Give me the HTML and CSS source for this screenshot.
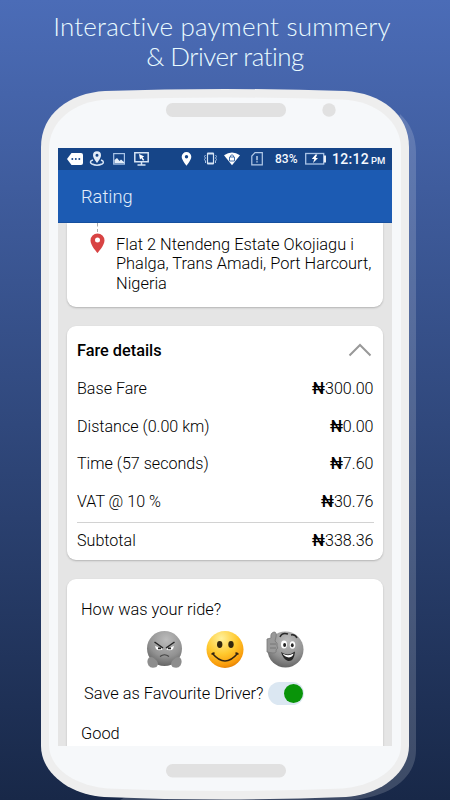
FILE: index.html
```html
<!DOCTYPE html>
<html lang="en">
<head>
<meta charset="utf-8">
<title>Rating</title>
<link rel="stylesheet" href="styles.css">
</head>
<body>
<main class="promo">
  <svg class="casing" viewBox="0 0 450 800" aria-hidden="true">
    <path class="casing-shadow" d="M400 114C411 124 416 137 416 152V750C416 778 390 797 352 800H120L300 700Z"/>
    <path class="casing-rim" d="M41 147C41 114 69 93 105 91Q225 87 345 91C381 93 409 114 409 147V746C409 773 380 795 346 797Q225 802 104 797C70 795 41 773 41 746Z"/>
    <path class="casing-face" d="M49 149C49 122 73 101 108 99.500Q225 95.500 342 99.500C377 101 401 122 401 149V745C401 768 375 786 342 788.500Q225 793.500 108 788.500C75 786 49 768 49 745Z"/>
    <rect class="casing-part" x="166" y="103" width="120" height="14" rx="6.500"/>
    <circle class="casing-part" cx="329" cy="110" r="6.700"/>
    <rect class="casing-part" x="166" y="764" width="120" height="13.500" rx="6.500"/>
  </svg>
  <div class="content">
    <h1 class="headline"><span class="headline-top">Interactive payment summery</span><span class="headline-bottom">&amp; Driver rating</span></h1>
    <section class="screen">
      <div class="status">
        <svg class="status-icons" width="95" height="22" viewBox="58 148 95 22">
          <path fill="#fff" d="M67 159L71.500 153H81Q83 153 83 155V163Q83 165 81 165H71.500Z"/>
          <g fill="#164588"><circle cx="72.300" cy="159" r="1"/><circle cx="75.800" cy="159" r="1"/><circle cx="79.300" cy="159" r="1"/></g>
          <path fill="#e4edf8" fill-rule="evenodd" d="M97 151.200A4 4 0 0 1 101 155.200C101 158 97 163 97 163S93 158 93 155.200A4 4 0 0 1 97 151.200ZM97 153.800A1.500 1.500 0 1 0 97 156.800A1.500 1.500 0 0 0 97 153.800Z"/>
          <path fill="none" stroke="#d5e3f4" stroke-width="1.500" d="M93 160C89.500 161 90 163 92 164Q97 166.300 102 164C104 163 104 161 101 160"/>
          <rect x="113.700" y="153.600" width="10.700" height="10.500" fill="none" stroke="#a9c4e7" stroke-width="1.200"/><path fill="#e4edf8" d="M114.500 160L117 158L119.500 161L121 159.500L124 162V163.300H114.500Z"/>
          <path fill="none" stroke="#d5e3f4" stroke-width="1.500" d="M134.800 152.800H148.200V161.700H134.800ZM141.500 162V165M137.500 165H145.500"/><path fill="#fff" d="M139 154L144.200 156.500L142.500 157.400L144.300 160L143 160.700L141.400 158.200L140 159.400Z"/>
        </svg>
        <svg class="status-icons" width="96" height="22" viewBox="175 148 96 22">
          <path fill="#fff" fill-rule="evenodd" d="M186.500 152A4.800 4.800 0 0 1 191.300 156.800C191.300 160.300 186.500 165.700 186.500 165.700S181.700 160.300 181.700 156.800A4.800 4.800 0 0 1 186.500 152ZM186.500 155A1.700 1.700 0 1 0 186.500 158.400A1.700 1.700 0 0 0 186.500 155Z"/>
          <rect x="207.500" y="153" width="6" height="11" rx=".5" fill="none" stroke="#d5e3f4" stroke-width="1.200"/><path d="M207.500 153.700H213.500M207.500 163.300H213.500" stroke="#d5e3f4" stroke-width="1.500"/>
          <path fill="none" stroke="#a9c4e7" d="M205.500 155L204.500 156.500L205.500 158L204.500 159.500L205.500 161V163M215.500 155L216.500 156.500L215.500 158L216.500 159.500L215.500 161V163"/>
          <path fill="#fff" d="M224 155.200Q232 149.800 240 155.200L232 165.200Z"/><path fill="none" stroke="#4772ad" d="M230.500 157V155.700Q232 153.800 233.500 155.700V157M229.500 157H234.500V161H229.500Z"/>
          <path fill="none" stroke="#b3cae8" stroke-width="1.200" d="M255 152.700H262.300V164.800H251.800V156Z"/><path stroke="#d5e3f4" stroke-width="1.300" d="M257 156V160.200M257 161.300V162.500"/>
        </svg>
        <span class="percent">83%</span>
        <svg class="battery" width="24" height="22" viewBox="304 148 24 22">
          <rect x="305.700" y="153.500" width="18" height="10.500" fill="none" stroke="#a9c4e7" stroke-width="1.300"/><path stroke="#fff" stroke-width="1.800" d="M325 155.500V162.500"/><path fill="#fff" d="M315.500 154.500L311.800 159H314.300L313 163L318 158H315.700L317.300 154.500Z"/>
        </svg>
        <div class="clock"><span>12:12</span><small>PM</small></div>
      </div>
      <header class="appbar">Rating</header>
      <div class="feed">
        <article class="card destination">
          <svg class="pin" width="16" height="32" viewBox="90 223 16 32">
            <path stroke="#aaa" d="M97.500 223V226.500M97.500 229V232"/>
            <path fill="#d84343" fill-rule="evenodd" d="M97.500 233.500A7 7 0 0 1 104.500 240.500C104.500 245.500 97.500 253 97.500 253S90.500 245.500 90.500 240.500A7 7 0 0 1 97.500 233.500ZM97.500 237.600A2.500 2.500 0 1 0 97.500 242.600A2.500 2.500 0 0 0 97.500 237.600Z"/>
          </svg>
          <p class="address">Flat 2 Ntendeng Estate Okojiagu i<br>Phalga, Trans Amadi, Port Harcourt,<br>Nigeria</p>
        </article>
        <article class="card fare">
          <div class="row fare-title"><h2>Fare details</h2>
            <svg width="24" height="14" viewBox="0 0 24 14"><path fill="none" stroke="#999" stroke-width="2" d="M1.500 12.500L12 2L22.500 12.500"/></svg>
          </div>
          <div class="row"><span>Base Fare</span><span><b>₦</b>300.00</span></div>
          <div class="row"><span>Distance (0.00 km)</span><span><b>₦</b>0.00</span></div>
          <div class="row"><span>Time (57 seconds)</span><span><b>₦</b>7.60</span></div>
          <div class="row"><span>VAT @ 10 %</span><span><b>₦</b>30.76</span></div>
          <div class="row subtotal"><span>Subtotal</span><span><b>₦</b>338.36</span></div>
        </article>
        <article class="card ride">
          <p class="question">How was your ride?</p>
          <svg class="faces" width="160" height="40" viewBox="145 630 160 40">
            <defs>
              <radialGradient id="gray" cx=".55" cy=".25" r=".75"><stop offset="0" stop-color="#bcbcbc"/><stop offset=".65" stop-color="#929292"/><stop offset="1" stop-color="#666"/></radialGradient>
              <radialGradient id="gold" cx=".4" cy=".2" r=".85"><stop offset="0" stop-color="#fff09a"/><stop offset=".5" stop-color="#ffc92e"/><stop offset=".85" stop-color="#f99b0b"/><stop offset="1" stop-color="#dd7904"/></radialGradient>
            </defs>
            <circle cx="164.500" cy="648.500" r="17.500" fill="url(#gray)"/>
            <g fill="#8d8d8d"><path d="M149 657.500Q152 656 155 659Q160 663 156.500 667Q151 669 148.500 665.500Q146 661 149 657.500Z"/><path d="M180 657.500Q177 656 174 659Q169 663 172.500 667Q178 669 180.500 665.500Q183 661 180 657.500Z"/></g>
            <path fill="#fff" d="M155 646L163 649Q159 651.500 156 649ZM174 646L166 649Q170 651.500 173 649Z"/>
            <path fill="none" stroke="#252525" stroke-width="1.500" d="M154.500 642L163 648M174.500 642L166 648"/>
            <path fill="none" stroke="#444" stroke-width="1.100" d="M160 656.500Q164.500 653 169 656.500"/>
            <path fill="#222" d="M158 647.500H161V649.300H158ZM168 647.500H171V649.300H168Z"/>
            <circle cx="225" cy="649.500" r="18.500" fill="url(#gold)"/>
            <g fill="#33270e"><ellipse cx="219.700" cy="644.500" rx="2.700" ry="3.400"/><ellipse cx="231" cy="644.500" rx="2.700" ry="3.400"/></g>
            <path fill="none" stroke="#332411" stroke-width="1.600" stroke-linecap="round" d="M212.500 653.500Q225 668.500 237.500 653.500M212 654L214 653M236 653L238 654"/>
            <circle cx="285.500" cy="649.500" r="18" fill="url(#gray)"/>
            <path fill="#999" stroke="#777" stroke-width=".8" d="M267 639L271 638Q270 633 274 632Q277 632 276 637L275 641Q278 643 277 646Q279 648 276 650Q277 653 273 653L267 652Z"/>
            <path fill="none" stroke="#777" d="M270 644H276M270 648H276"/>
            <g fill="#fff"><ellipse cx="284" cy="644.500" rx="3" ry="3.900"/><ellipse cx="292.500" cy="645" rx="2.800" ry="3.800"/></g>
            <g fill="#222"><ellipse cx="284.600" cy="645" rx="1.500" ry="2"/><ellipse cx="292.300" cy="645.300" rx="1.400" ry="2"/></g>
            <path fill="none" stroke="#292929" stroke-width="1.500" d="M280 637Q282 632 288 634M291 635Q295 634 297 638"/>
            <path fill="#252525" d="M281 652Q288 657 295 651.500Q294 662 288 661Q283 659 281 652Z"/><path fill="#fff" d="M282.500 653.500Q288 657 293.500 653.500Q293 657 289 657.500Q284.500 657 282.500 653.500Z"/>
          </svg>
          <div class="favourite"><span>Save as Favourite Driver?</span><span class="toggle"><i></i></span></div>
          <p class="verdict">Good</p>
        </article>
      </div>
    </section>
  </div>
</main>
</body>
</html>
```

FILE: styles.css
```css
* { box-sizing: border-box; }
body { margin: 0; font-family: Roboto, "Liberation Sans", sans-serif; }
h1, h2, p { margin: 0; }
svg { display: block; flex: none; }

.promo {
  display: grid;
  width: 450px;
  height: 800px;
  overflow: hidden;
  background: linear-gradient(#4b6cb7, #182848);
}
.casing, .content { grid-area: 1 / 1; width: 450px; height: 800px; }
.casing-shadow { fill: #fff; opacity: .16; }
.casing-rim { fill: #eee; }
.casing-face { fill: #f6f8fa; }
.casing-part { fill: #e1e1e1; }

.content { display: flex; flex-direction: column; align-items: center; }
.headline {
  display: flex;
  flex-direction: column;
  align-items: center;
  height: 148px;
  padding-top: 11px;
  color: #e9fbff;
  font: 300 26px/30px Lato, sans-serif;
  white-space: nowrap;
}
.headline-top { letter-spacing: .2px; margin-right: 6px; }
.headline-bottom { letter-spacing: -.5px; }

.screen {
  display: flex;
  flex-direction: column;
  width: 334px;
  height: 598px;
  overflow: hidden;
  background: #e5e5e5;
  font-weight: 300;
  font-size: 16.400px;
  color: #000;
}
.status {
  display: flex;
  align-items: center;
  height: 22px;
  flex: none;
  background: #164588;
  color: #f5f9ff;
  white-space: nowrap;
}
.status-icons + .status-icons { margin-left: 22px; }
.percent { width: 33px; padding-left: 4px; font-size: 12px; font-weight: 500; }
.clock {
  display: flex;
  align-items: baseline;
  gap: 2px;
  padding-left: 4px;
  font-size: 14px;
  font-weight: 500;
  letter-spacing: .3px;
}
.clock small { font-size: 9.500px; letter-spacing: 0; }
.appbar {
  height: 53px;
  flex: none;
  padding-left: 23px;
  background: #1c5bb3;
  border-bottom: 1px solid #1650a0;
  color: #e3eefb;
  font-size: 18.300px;
  line-height: 54px;
}
.feed { display: flex; flex-direction: column; gap: 19px; padding: 0 9px; }
.card {
  flex: none;
  background: #fff;
  border-radius: 9px;
  box-shadow: 0 1px 2px rgba(0, 0, 0, .22);
}
.destination {
  display: flex;
  gap: 10px;
  height: 84px;
  padding-left: 23px;
  border-radius: 0 0 9px 9px;
}
.address { padding-top: 12px; line-height: 19.300px; white-space: nowrap; }
.fare { height: 234px; padding: 4px 9.500px 0 10px; font-size: 16.100px; }
.row {
  display: flex;
  align-items: center;
  justify-content: space-between;
  height: 37.500px;
}
.row b { font-weight: 500; }
.fare-title { height: 40px; padding-right: 2px; }
.fare-title h2 { font-size: 16.300px; font-weight: 500; }
.subtotal { margin-top: 2px; height: 35px; border-top: 1px solid #d2d2d2; }
.ride { height: 180px; padding: 21px 14px 0; }
.question, .verdict { line-height: 20px; }
.faces { margin: 10px 0 0 64px; }
.favourite { display: flex; align-items: center; gap: 5px; height: 23px; margin: 12px 0 0 3px; white-space: nowrap; }
.toggle { display: flex; justify-content: flex-end; width: 36px; height: 23px; padding: 2px 1px; border-radius: 12px; background: #dbe7f2; }
.toggle i { width: 19px; height: 19px; border-radius: 50%; background: #099409; }
.verdict { margin-top: 19px; }
```
